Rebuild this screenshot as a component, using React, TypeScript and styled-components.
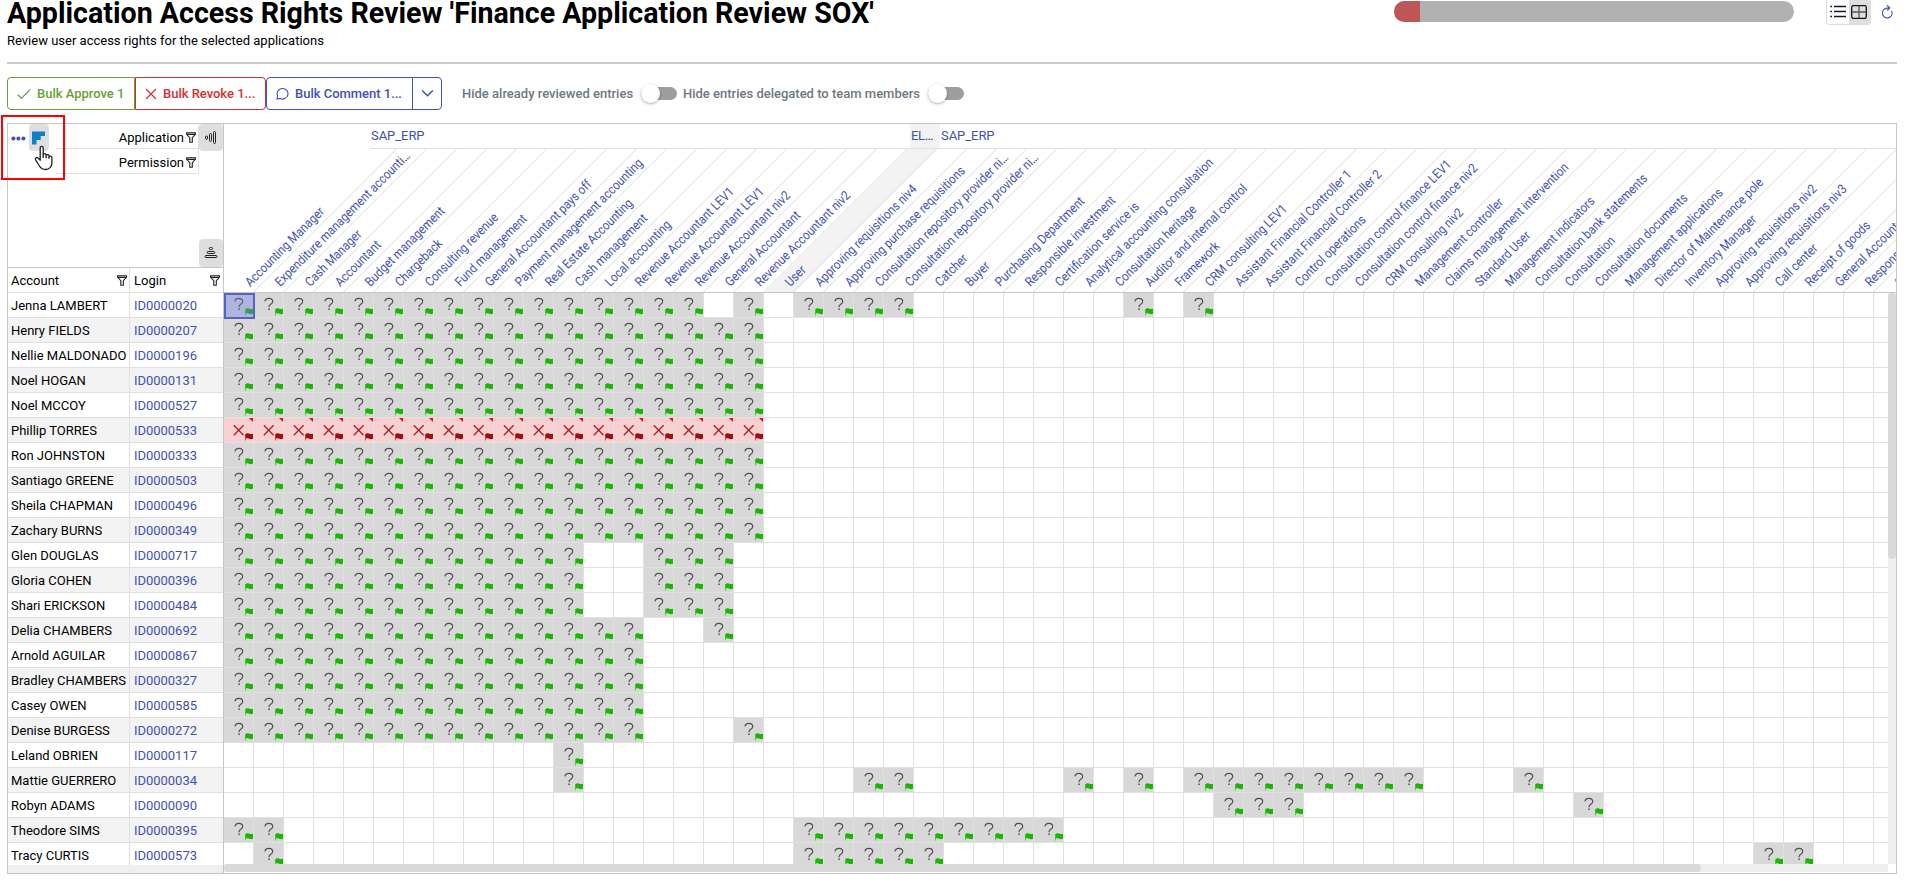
import React from 'react';
import styled, { createGlobalStyle, css } from 'styled-components';

const GlobalStyle = createGlobalStyle`
  *, *::before, *::after { box-sizing: border-box; }
  html, body { margin: 0; background: #fff; overflow: hidden; }
  body { font-family: Roboto, "Liberation Sans", sans-serif; font-size: 13px; color: #000; }
  svg { display: block; flex: none; }
`;

const LINK = '#3f51b5';
const LINE = '#e0e0e0';
const FRAME = '#c6c6c6';

const columns = [
  'Accounting Manager', 'Expenditure management accounti…', 'Cash Manager', 'Accountant', 'Budget management',
  'Chargeback', 'Consulting revenue', 'Fund management', 'General Accountant pays off', 'Payment management accounting',
  'Real Estate Accounting', 'Cash management', 'Local accounting', 'Revenue Accountant LEV1', 'Revenue Accountant LEV1',
  'Revenue Accountant niv2', 'General Accountant', 'Revenue Accountant niv2', 'User', 'Approving requisitions niv4',
  'Approving purchase requisitions', 'Consultation repository provider ni…', 'Consultation repository provider ni…',
  'Catcher', 'Buyer', 'Purchasing Department', 'Responsible investment', 'Certification service is',
  'Analytical accounting consultation', 'Consultation heritage', 'Auditor and internal control', 'Framework',
  'CRM consulting LEV1', 'Assistant Financial Controller 1', 'Assistant Financial Controller 2', 'Control operations',
  'Consultation control finance LEV1', 'Consultation control finance niv2', 'CRM consulting niv2',
  'Management controller', 'Claims management intervention', 'Standard User', 'Management indicators',
  'Consultation bank statements', 'Consultation', 'Consultation documents', 'Management applications',
  'Director of Maintenance pole', 'Inventory Manager', 'Approving requisitions niv2', 'Approving requisitions niv3',
  'Call center', 'Receipt of goods', 'General Accountant', 'Responsible', 'Sales',
];
const SHADED_COLUMN = 18;

type Span = [number, number];
interface Account { name: string; login: string; spans: Span[]; revoked?: boolean }

const accounts: Account[] = [
  { name: 'Jenna LAMBERT', login: 'ID0000020', spans: [[0, 15], [17, 17], [19, 22], [30, 30], [32, 32]] },
  { name: 'Henry FIELDS', login: 'ID0000207', spans: [[0, 17]] },
  { name: 'Nellie MALDONADO', login: 'ID0000196', spans: [[0, 17]] },
  { name: 'Noel HOGAN', login: 'ID0000131', spans: [[0, 17]] },
  { name: 'Noel MCCOY', login: 'ID0000527', spans: [[0, 17]] },
  { name: 'Phillip TORRES', login: 'ID0000533', spans: [[0, 17]], revoked: true },
  { name: 'Ron JOHNSTON', login: 'ID0000333', spans: [[0, 17]] },
  { name: 'Santiago GREENE', login: 'ID0000503', spans: [[0, 17]] },
  { name: 'Sheila CHAPMAN', login: 'ID0000496', spans: [[0, 17]] },
  { name: 'Zachary BURNS', login: 'ID0000349', spans: [[0, 17]] },
  { name: 'Glen DOUGLAS', login: 'ID0000717', spans: [[0, 11], [14, 16]] },
  { name: 'Gloria COHEN', login: 'ID0000396', spans: [[0, 11], [14, 16]] },
  { name: 'Shari ERICKSON', login: 'ID0000484', spans: [[0, 11], [14, 16]] },
  { name: 'Delia CHAMBERS', login: 'ID0000692', spans: [[0, 13], [16, 16]] },
  { name: 'Arnold AGUILAR', login: 'ID0000867', spans: [[0, 13]] },
  { name: 'Bradley CHAMBERS', login: 'ID0000327', spans: [[0, 13]] },
  { name: 'Casey OWEN', login: 'ID0000585', spans: [[0, 13]] },
  { name: 'Denise BURGESS', login: 'ID0000272', spans: [[0, 13], [17, 17]] },
  { name: 'Leland OBRIEN', login: 'ID0000117', spans: [[11, 11]] },
  { name: 'Mattie GUERRERO', login: 'ID0000034', spans: [[11, 11], [21, 22], [28, 28], [30, 30], [32, 39], [43, 43]] },
  { name: 'Robyn ADAMS', login: 'ID0000090', spans: [[33, 35], [45, 45]] },
  { name: 'Theodore SIMS', login: 'ID0000395', spans: [[0, 1], [19, 27]] },
  { name: 'Tracy CURTIS', login: 'ID0000573', spans: [[1, 1], [19, 23], [51, 52]] },
];

/* ---------- page header ---------- */

const Page = styled.div`
  position: relative;
  width: 1908px;
  height: 888px;
  padding: 0 11px 0 7px;
  overflow: hidden;
`;

const Header = styled.header`
  display: flex;
  justify-content: space-between;
  height: 64px;
  border-bottom: 2px solid #cbcbcb;
`;

const Title = styled.h1`
  margin: -5px 0 0;
  font-size: 28.6px;
  line-height: 36px;
  font-weight: 700;
  white-space: nowrap;
`;

const Subtitle = styled.p`
  margin: 2px 0 0;
  font-size: 13px;
  line-height: 16px;
`;

const HeaderTools = styled.div`
  display: flex;
  flex: none;
  align-items: flex-start;
`;

const Progress = styled.div`
  flex: none;
  width: 400px;
  height: 21px;
  margin: 1px 32px 0 0;
  border-radius: 11px;
  background: #b1b1b1;
  overflow: hidden;
`;

const ProgressDone = styled.div`
  width: 26px;
  height: 100%;
  background: #be5655;
`;

const ViewSwitch = styled.div`
  display: flex;
  flex: none;
  width: 45px;
  height: 26px;
  margin: -1px 11px 0 0;
  border: 1px solid #dedede;
  border-radius: 3px;
  overflow: hidden;
`;

const ViewButton = styled.div<{ $active?: boolean }>`
  display: flex;
  align-items: center;
  justify-content: center;
  flex: 1;
  background: ${(p) => (p.$active ? '#dedede' : '#fff')};
`;

const Refresh = styled.div`
  width: 11px;
  margin: 5px 4px 0 0;
`;

/* ---------- toolbar ---------- */

const Toolbar = styled.div`
  display: flex;
  align-items: center;
  height: 59px;
`;

const BulkButton = styled.div<{ $color: string; $width: number; $edge: 'left' | 'right' }>`
  display: flex;
  flex: none;
  align-items: center;
  width: ${(p) => p.$width}px;
  height: 33px;
  padding-left: 9px;
  gap: 6px;
  border: 1px solid ${(p) => p.$color};
  border-radius: ${(p) => (p.$edge === 'left' ? '4px 0 0 4px' : '0 4px 4px 0')};
  color: ${(p) => p.$color};
  font-weight: 500;
  letter-spacing: -0.02px;
  white-space: nowrap;
`;

const SplitArrow = styled.div`
  display: flex;
  align-items: center;
  justify-content: center;
  width: 30px;
  height: 33px;
  margin-left: -1px;
  border: 1px solid ${LINK};
  border-radius: 0 4px 4px 0;
`;

const Toggles = styled.div`
  display: flex;
  gap: 6px;
  margin-left: 20px;
`;

const Toggle = styled.div<{ $labelWidth: number }>`
  display: flex;
  align-items: center;
  color: #6e7882;
  font-weight: 500;
  white-space: nowrap;

  > span { width: ${(p) => p.$labelWidth}px; }
`;

const Track = styled.div`
  display: flex;
  flex: none;
  align-items: center;
  width: 36px;
  height: 13px;
  margin-left: 5px;
  border-radius: 7px;
  background: #9e9e9e;

  &::before {
    content: '';
    width: 19px;
    height: 19px;
    flex: none;
    border-radius: 50%;
    background: #fff;
    box-shadow: 0 1px 3px rgba(0, 0, 0, 0.32);
  }
`;

/* ---------- matrix ---------- */

const Matrix = styled.main`
  display: flex;
  width: 1890px;
  height: 751px;
  border: 1px solid ${FRAME};
`;

const LeftPane = styled.section`
  display: flex;
  flex-direction: column;
  width: 216px;
  border-right: 1px solid ${FRAME};
  background: #efefef;
`;

const Corner = styled.div`
  display: flex;
  height: 144px;
  border-bottom: 1px solid ${FRAME};
  background: #fff;
`;

const CornerActions = styled.div`
  display: flex;
  width: 48px;
  padding-left: 3px;
`;

const IconTile = styled.div<{ $w: number; $h: number }>`
  display: flex;
  align-items: center;
  justify-content: center;
  width: ${(p) => p.$w}px;
  height: ${(p) => p.$h}px;
  border-radius: 4px;
  background: #dedede;
`;

const Dimensions = styled.div`
  width: 143px;
`;

const Dimension = styled.div`
  display: flex;
  align-items: center;
  justify-content: flex-end;
  gap: 2px;
  height: 25px;
  padding: 2px 2px 0 0;
  border: solid ${LINE};
  border-width: 0 1px 1px 0;
`;

const SortColumn = styled.div`
  display: flex;
  flex-direction: column;
  justify-content: space-between;
`;

const AccountRow = styled.div<{ $shaded?: boolean }>`
  display: flex;
  flex: none;
  height: 25px;
  background: ${(p) => (p.$shaded ? '#f3f3f3' : '#fff')};
`;

const AccountList = styled.div`
  height: 572px;
  overflow: hidden;
`;

const Field = styled.div<{ $w: number; $link?: boolean }>`
  display: flex;
  align-items: center;
  justify-content: space-between;
  width: ${(p) => p.$w}px;
  padding: 1px 2px 0 ${(p) => (p.$w > 100 ? 3 : 4)}px;
  border: solid ${LINE};
  border-width: 0 1px 1px 0;
  color: ${(p) => (p.$link ? LINK : '#000')};
  letter-spacing: ${(p) => (p.$link ? '-0.03px' : 'normal')};
  white-space: nowrap;

  &:last-child { border-right: 0; padding-right: 3px; }
`;

const RightPane = styled.section`
  width: 1672px;
  overflow: hidden;
`;

const Groups = styled.div`
  display: flex;
  width: 1526px;
  height: 25px;
  margin-left: 146px;
  border-bottom: 1px solid ${LINE};
`;

const Group = styled.div<{ $w: number; $shaded?: boolean }>`
  flex: none;
  width: ${(p) => p.$w}px;
  padding-left: 1px;
  background: ${(p) => (p.$shaded ? '#f3f3f3' : '#fff')};
  color: ${LINK};
  line-height: 23px;
  letter-spacing: ${(p) => (p.$shaded ? '-0.3px' : '-0.05px')};
  white-space: nowrap;
`;

const Dots = styled.span`
  color: #333;
`;

const ColumnHeads = styled.div`
  display: flex;
  height: 144px;
  overflow: hidden;
  border-bottom: 1px solid ${FRAME};
`;

const ColumnHead = styled.div<{ $shaded: boolean }>`
  position: relative;
  flex: none;
  width: 30px;
  height: 143px;

  &::before {
    content: '';
    display: block;
    height: 100%;
    border-right: 1px solid #dcdcdc;
    background: ${(p) => (p.$shaded ? '#f3f3f3' : 'transparent')};
    transform: skewX(-45deg);
    transform-origin: 0 100%;
  }
`;

const ColumnLabel = styled.span`
  position: absolute;
  left: 29px;
  bottom: 2px;
  white-space: nowrap;
  line-height: 16px;
  color: ${LINK};
  transform: rotate(-45deg) scaleX(0.88);
  transform-origin: 0 100%;
`;

const Body = styled.div`
  display: flex;
  height: 571px;
`;

const Grid = styled.div`
  width: 1664px;
  overflow: hidden;
`;

const GridRow = styled.div`
  display: flex;
  height: 25px;
`;

const Cell = styled.div<{ $state: 'empty' | 'pending' | 'revoked'; $selected?: boolean }>`
  position: relative;
  flex: none;
  width: 30px;
  height: 25px;
  border: solid #e1e1e1;
  border-width: 0 1px 1px 0;
  background: ${(p) => (p.$state === 'pending' ? '#d8d8d8' : p.$state === 'revoked' ? '#f7d1d2' : '#fff')};

  ${(p) => p.$selected && css`
    &::after {
      content: '';
      position: absolute;
      left: 0;
      top: 0;
      width: 31px;
      height: 26px;
      border: 2px solid #5464c6;
      background: rgba(100, 118, 232, 0.35);
      z-index: 2;
    }
  `}
`;

const VScroll = styled.div`
  width: 8px;
  background: #efefef;

  &::before {
    content: '';
    display: block;
    height: 266px;
    border-radius: 4px;
    background: #d9d9d9;
  }
`;

const HScroll = styled.div`
  width: 1664px;
  height: 8px;
  background: #efefef;

  &::before {
    content: '';
    display: block;
    width: 1477px;
    height: 8px;
    border-radius: 4px;
    background: #d9d9d9;
  }
`;

/* ---------- callout ---------- */

const Callout = styled.div`
  position: absolute;
  left: 1px;
  top: 115px;
  width: 64px;
  height: 65px;
  border: 2px solid #f00;
`;

const Pointer = styled.svg`
  position: absolute;
  left: 31px;
  top: 28px;
`;

/* ---------- icons ---------- */

const Funnel = () => (
  <svg width="10" height="11" viewBox="0 0 10 11" fill="none" stroke="#222" strokeWidth="1.1">
    <path d="M.6.7h8.8v1.600L6.300 5.600v4.600H3.800V5.600L.6 2.300zM.8 2.400h8.400" />
  </svg>
);

const Flag = ({ fill, pole }: { fill: string; pole: string }) => (
  <>
    <path d="M21.500 16v6.500" stroke={pole} strokeWidth="1" />
    <path d="M21.600 15.900c.8-.9 2-.9 3.200-.4 1.400.6 2.600.8 4.200.3v5c-1.600.5-2.900.4-4-.1-1-.5-2.200-.6-3.400 0z" fill={fill} />
  </>
);

const PendingMark = () => (
  <svg width="29" height="24" viewBox="0 0 29 24" fill="none">
    <path d="M11 8.400c.2-2 1.500-3.100 3.800-3.100 2.300 0 3.900 1.200 3.900 3.200 0 2.700-3.700 2.900-3.700 5.300v.4" stroke="#4f4f4f" strokeWidth="1.200" />
    <path d="M14.300 15.500h1.500v1.500h-1.500z" fill="#4f4f4f" />
    <Flag fill="#1cb506" pole="#5ecb50" />
  </svg>
);

const RevokedMark = () => (
  <svg width="29" height="24" viewBox="0 0 29 24" fill="none">
    <path d="M9.800 7.300l9.800 10M19.600 7.300l-9.800 10" stroke="#b51c20" strokeWidth="1.300" />
    <Flag fill="#a30d0d" pole="#c25a5a" />
    <path d="M25 0h4v4z" fill="#f00" />
  </svg>
);

const CheckIcon = () => (
  <svg width="14" height="14" viewBox="0 0 14 14" fill="none" stroke="#689f38" strokeWidth="1.200">
    <path d="M.7 7.800l3.700 3.500L13.300 2.300" />
  </svg>
);

const CrossIcon = () => (
  <svg width="12" height="12" viewBox="0 0 12 12" fill="none" stroke="#d32f2f" strokeWidth="1.200">
    <path d="M1 1l10 10M11 1L1 11" />
  </svg>
);

const BubbleIcon = () => (
  <svg width="13" height="13" viewBox="0 0 13 13" fill="none" stroke={LINK} strokeWidth="1.100">
    <path d="M1 12l.6-3.200A5.400 5.300 0 1 1 4 11.400z" />
  </svg>
);

const ChevronIcon = () => (
  <svg width="13" height="9" viewBox="0 0 13 9" fill="none" stroke={LINK} strokeWidth="1.500">
    <path d="M1.200 1.500l5.300 5.200 5.300-5.200" />
  </svg>
);

const Label = ({ text }: { text: string }) =>
  text.endsWith('…') ? <>{text.slice(0, -1)}<Dots>…</Dots></> : <>{text}</>;

const cellState = (account: Account, column: number) => {
  const filled = account.spans.some(([from, to]) => column >= from && column <= to);
  return !filled ? 'empty' : account.revoked ? 'revoked' : 'pending';
};

export default function App() {
  return (
    <Page>
      <GlobalStyle />
      <Header>
        <div>
          <Title>Application Access Rights Review 'Finance Application Review SOX'</Title>
          <Subtitle>Review user access rights for the selected applications</Subtitle>
        </div>
        <HeaderTools>
          <Progress><ProgressDone /></Progress>
          <ViewSwitch>
            <ViewButton>
              <svg width="16" height="14" viewBox="0 0 16 14" stroke="#151530" strokeWidth="1.300">
                <path d="M4 1.500h12M4 6.500h12M4 11.500h12" />
                <path d="M.3 1.500H2M.3 6.500H2M.3 11.500H2" strokeWidth="1.700" />
              </svg>
            </ViewButton>
            <ViewButton $active>
              <svg width="16" height="14" viewBox="0 0 16 14" fill="none" stroke="#1a1020" strokeWidth="1.300">
                <rect x=".7" y=".6" width="14.600" height="12.800" rx="1.800" />
                <path d="M8 1v12M1 7h14" stroke="#5a5458" strokeWidth="1.300" />
              </svg>
            </ViewButton>
          </ViewSwitch>
          <Refresh>
            <svg width="11" height="14" viewBox="0 0 11 14" fill="none" stroke={LINK} strokeWidth="1.200">
              <path d="M3 3.800A4.800 4.800 0 1 0 9.600 6" />
              <path d="M2.800 4c1.400-1 3-1.300 4.700-1.200M5 .4l2.700 2.400L5.300 5.500" />
            </svg>
          </Refresh>
        </HeaderTools>
      </Header>

      <Toolbar>
        <BulkButton $color="#689f38" $width={128} $edge="left"><CheckIcon />Bulk Approve 1</BulkButton>
        <BulkButton $color="#d32f2f" $width={131} $edge="right"><CrossIcon />Bulk Revoke 1...</BulkButton>
        <BulkButton $color={LINK} $width={147} $edge="left"><BubbleIcon />Bulk Comment 1...</BulkButton>
        <SplitArrow><ChevronIcon /></SplitArrow>
        <Toggles>
          <Toggle $labelWidth={174}><span>Hide already reviewed entries</span><Track /></Toggle>
          <Toggle $labelWidth={240}><span>Hide entries delegated to team members</span><Track /></Toggle>
        </Toggles>
      </Toolbar>

      <Matrix>
        <LeftPane>
          <Corner>
            <CornerActions>
              <svg width="18" height="28" viewBox="0 0 18 28" fill={LINK}>
                <circle cx="2.400" cy="14.400" r="2" /><circle cx="7.400" cy="14.400" r="2" /><circle cx="12.400" cy="14.400" r="2" />
              </svg>
              <IconTile $w={20} $h={27}>
                <svg width="14" height="14" viewBox="0 0 14 14" fill="#0a80cc">
                  <path d="M0 .5h13V5H8.700v4H4.500v4.500H0z" />
                </svg>
              </IconTile>
            </CornerActions>
            <Dimensions>
              <Dimension>Application<Funnel /></Dimension>
              <Dimension>Permission<Funnel /></Dimension>
            </Dimensions>
            <SortColumn>
              <IconTile $w={24} $h={27}>
                <svg width="14" height="14" viewBox="0 0 14 14" fill="none" stroke="#222" strokeWidth="1">
                  <rect x="1.500" y="5" width="2" height="3.400" rx="1" />
                  <rect x="5.500" y="2.500" width="2" height="8" rx="1" />
                  <rect x="9.500" y=".5" width="2" height="12" rx="1" />
                </svg>
              </IconTile>
              <IconTile $w={24} $h={28}>
                <svg width="14" height="14" viewBox="0 0 14 14" fill="none" stroke="#222" strokeWidth="1">
                  <rect x="5.300" y="1.500" width="3.400" height="2" rx="1" />
                  <rect x="3.200" y="5.500" width="7.600" height="2" rx="1" />
                  <rect x="1" y="9.500" width="12" height="2" rx="1" />
                </svg>
              </IconTile>
            </SortColumn>
          </Corner>
          <AccountRow>
            <Field $w={122}>Account<Funnel /></Field>
            <Field $w={93}>Login<Funnel /></Field>
          </AccountRow>
          <AccountList>
            {accounts.map((account, i) => (
              <AccountRow key={account.login} $shaded={i % 2 === 1}>
                <Field $w={122}>{account.name}</Field>
                <Field $w={93} $link>{account.login}</Field>
              </AccountRow>
            ))}
          </AccountList>
        </LeftPane>

        <RightPane>
          <Groups>
            <Group $w={540}>SAP_ERP</Group>
            <Group $w={30} $shaded>EL<Dots>…</Dots></Group>
            <Group $w={956}>SAP_ERP</Group>
          </Groups>
          <ColumnHeads>
            {columns.map((label, i) => (
              <ColumnHead key={i} $shaded={i === SHADED_COLUMN}>
                <ColumnLabel><Label text={label} /></ColumnLabel>
              </ColumnHead>
            ))}
          </ColumnHeads>
          <Body>
            <Grid>
              {accounts.map((account, r) => (
                <GridRow key={account.login}>
                  {columns.map((_, c) => {
                    const state = cellState(account, c);
                    return (
                      <Cell key={c} $state={state} $selected={r === 0 && c === 0}>
                        {state === 'pending' && <PendingMark />}
                        {state === 'revoked' && <RevokedMark />}
                      </Cell>
                    );
                  })}
                </GridRow>
              ))}
            </Grid>
            <VScroll />
          </Body>
          <HScroll />
        </RightPane>
      </Matrix>

      <Callout>
        <Pointer width="20" height="26" viewBox="0 0 20 26" fill="#fff" stroke="#222" strokeWidth="1.300" strokeLinejoin="round">
          <path d="M6.200 15.200V3c0-2.300 3-2.300 3 0v6.600c.2-1.500 2.900-1.400 2.900.3v.7c.3-1.300 2.800-1.200 2.900.5v.8c.4-1.200 2.900-1 2.900.8v5.200c0 3.800-2.600 6.600-6.300 6.600-3.300 0-5-1.400-6.500-4L1.600 14.800c-.9-1.700 1.300-3 2.600-1.700z" />
          <path d="M9.200 9.600v3.300M12.100 10.600v2.600M15 11.900v1.900" fill="none" />
        </Pointer>
      </Callout>
    </Page>
  );
}
